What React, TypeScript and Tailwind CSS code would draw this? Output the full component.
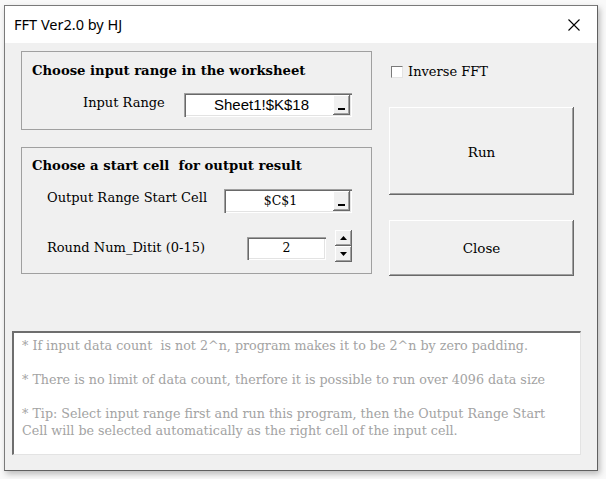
import React from "react";

const serif = { fontFamily: '"DejaVu Serif", "Liberation Serif", serif' };

function RefButton() {
  return (
    <div className="w-[17px] h-[20px] bg-[#f0f0f0] shadow-[inset_-1px_-1px_0_#696969,inset_1px_1px_0_#ffffff,inset_-2px_-2px_0_#a0a0a0] flex items-end justify-center pb-[5px]">
      <div className="w-[7px] h-[2px] bg-black" />
    </div>
  );
}

function Sunken({ className, children }: { className: string; children: React.ReactNode }) {
  return (
    <div
      className={
        "bg-white shadow-[inset_1px_1px_0_#a0a0a0,inset_2px_2px_0_#696969,inset_-1px_-1px_0_#ffffff,inset_-2px_-2px_0_#e3e3e3] flex items-center " +
        className
      }
    >
      {children}
    </div>
  );
}

function SpinBtn({ up }: { up?: boolean }) {
  return (
    <div className="w-[17px] h-[16px] bg-[#f0f0f0] shadow-[inset_-1px_-1px_0_#696969,inset_1px_1px_0_#ffffff,inset_-2px_-2px_0_#a0a0a0] flex items-center justify-center">
      <svg width="7" height="4" viewBox="0 0 7 4">
        {up ? <polygon points="0,4 7,4 3.5,0" fill="#000" /> : <polygon points="0,0 7,0 3.5,4" fill="#000" />}
      </svg>
    </div>
  );
}

const btn =
  "bg-[#f0f0f0] shadow-[inset_-1px_-1px_0_#696969,inset_1px_1px_0_#ffffff,inset_-2px_-2px_0_#a0a0a0] text-[13.5px] text-black flex items-center justify-center w-[185px]";

export default function App() {
  return (
    <div className="w-[606px] h-[479px] bg-[#f9f9f9] relative overflow-hidden">
      <div className="absolute left-[4px] top-[5px] w-[594px] h-[466px] border border-[#7a7a7a] border-b-[#606060] border-r-[#606060] shadow-[2px_3px_6px_rgba(0,0,0,0.25)] flex flex-col bg-[#f0f0f0]">
        {/* Title bar */}
        <div className="h-[37px] bg-white flex items-center justify-between pl-[9px] pr-[17px] shrink-0">
          <span className="text-[14.5px] text-black" style={{ fontFamily: '"Noto Sans", "Open Sans", sans-serif' }}>
            FFT Ver2.0 by HJ
          </span>
          <svg width="12" height="12" viewBox="0 0 12 12">
            <path d="M0.5 0.5 L11.5 11.5 M11.5 0.5 L0.5 11.5" stroke="#000" strokeWidth="1.1" />
          </svg>
        </div>

        {/* Body */}
        <div className="flex-1 flex flex-col" style={serif}>
          <div className="flex pt-[8px] pl-[16px]">
            {/* Left column */}
            <div className="w-[351px] flex flex-col gap-[17px]">
              <div className="h-[79px] border border-[#a0a0a0] flex flex-col">
                <div className="pl-[10px] pt-[9px] h-[30px] text-[13.2px] font-bold text-black leading-[20px]">
                  Choose input range in the worksheet
                </div>
                <div className="flex items-center mt-[11px] h-[24px]">
                  <span className="ml-[61px] text-[13px] text-black leading-[20px] -mt-[4px]">Input Range</span>
                  <Sunken className="ml-auto mr-[19px] w-[168px] h-[24px] pr-[2px]">
                    <span
                      className="flex-1 text-center text-[15px] text-black leading-[20px] pl-[6px]"
                      style={{ fontFamily: '"Liberation Sans", Arial, sans-serif' }}
                    >
                      Sheet1!$K$18
                    </span>
                    <RefButton />
                  </Sunken>
                </div>
              </div>

              <div className="h-[127px] border border-[#a0a0a0] flex flex-col">
                <div className="pl-[10px] pt-[8px] h-[28px] text-[13.2px] font-bold text-black leading-[20px]">
                  Choose a start cell&nbsp; for output result
                </div>
                <div className="flex items-center mt-[13px] h-[24px]">
                  <span className="ml-[25px] text-[13px] text-black leading-[20px] -mt-[6px]">Output Range Start Cell</span>
                  <Sunken className="ml-auto mr-[19px] w-[128px] h-[24px] pr-[2px]">
                    <span className="flex-1 text-center text-[12.5px] text-black leading-[20px] pl-[4px]">$C$1</span>
                    <RefButton />
                  </Sunken>
                </div>
                <div className="flex items-center mt-[17px] h-[32px]">
                  <span className="ml-[25px] text-[13px] text-black leading-[20px] mt-[4px]">Round Num_Ditit (0-15)</span>
                  <Sunken className="ml-auto w-[79px] h-[23px] mt-[4px]">
                    <span className="flex-1 text-center text-[12.5px] text-black leading-[20px]">2</span>
                  </Sunken>
                  <div className="ml-[9px] mr-[19px] flex flex-col">
                    <SpinBtn up />
                    <SpinBtn />
                  </div>
                </div>
              </div>
            </div>

            {/* Right column */}
            <div className="ml-[17px] w-[185px] flex flex-col">
              <div className="flex items-center mt-[14px] h-[13px] pl-[2px]">
                <div className="w-[12px] h-[12px] bg-white border border-[#7a7a7a] border-r-[#e3e3e3] border-b-[#e3e3e3]" />
                <span className="ml-[5px] text-[13px] text-black leading-[20px]">Inverse FFT</span>
              </div>
              <button className={"mt-[29px] h-[88px] pt-[2px] " + btn}>Run</button>
              <button className={"mt-[25px] h-[56px] " + btn}>Close</button>
            </div>
          </div>

          {/* Text box */}
          <div className="ml-[7px] mt-[55px] w-[569px] h-[124px] bg-white border-t-2 border-l-2 border-t-[#6e6e6e] border-l-[#6e6e6e] border-r border-b border-r-[#e3e3e3] border-b-[#e3e3e3] pl-[8px] pt-[4px] text-[12.7px] leading-[17px] text-[#a3a3a3]">
            <p>* If input data count&nbsp; is not 2^n, program makes it to be 2^n by zero padding.</p>
            <p>&nbsp;</p>
            <p>* There is no limit of data count, therfore it is possible to run over 4096 data size</p>
            <p>&nbsp;</p>
            <p>
              * Tip: Select input range first and run this program, then the Output Range Start
              <br />
              Cell will be selected automatically as the right cell of the input cell.
            </p>
          </div>
        </div>
      </div>
    </div>
  );
}
